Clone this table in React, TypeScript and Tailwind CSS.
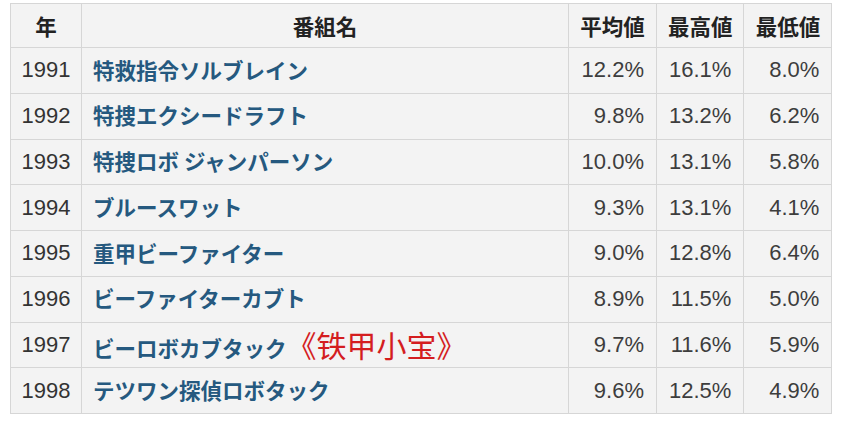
const rows = [
  { year: "1991", title: "特救指令ソルブレイン", avg: "12.2%", max: "16.1%", min: "8.0%" },
  { year: "1992", title: "特捜エクシードラフト", avg: "9.8%", max: "13.2%", min: "6.2%" },
  { year: "1993", title: "特捜ロボ ジャンパーソン", avg: "10.0%", max: "13.1%", min: "5.8%" },
  { year: "1994", title: "ブルースワット", avg: "9.3%", max: "13.1%", min: "4.1%" },
  { year: "1995", title: "重甲ビーファイター", avg: "9.0%", max: "12.8%", min: "6.4%" },
  { year: "1996", title: "ビーファイターカブト", avg: "8.9%", max: "11.5%", min: "5.0%" },
  { year: "1997", title: "ビーロボカブタック", note: "《铁甲小宝》", avg: "9.7%", max: "11.6%", min: "5.9%" },
  { year: "1998", title: "テツワン探偵ロボタック", avg: "9.6%", max: "12.5%", min: "4.9%" },
]

const jp = "font-['Noto_Sans_CJK_JP',sans-serif]"
const num = "font-['Liberation_Sans',Arial,sans-serif] text-[22px]"

export default function App() {
  return (
    <div className="w-[841px] h-[422px] bg-white pt-[3px] pl-[10px]">
      <table className="border-collapse bg-[#f3f3f3] text-[21.5px] leading-none">
        <thead>
          <tr className="h-[44px]">
            <th className={`w-[71px] border border-[#d6d6d6] font-semibold text-[#222] ${jp}`}>年</th>
            <th className={`w-[487px] border border-[#d6d6d6] font-semibold text-[#222] ${jp}`}>番組名</th>
            <th className={`w-[88px] border border-[#d6d6d6] font-semibold text-[#222] ${jp}`}>平均値</th>
            <th className={`w-[87px] border border-[#d6d6d6] font-semibold text-[#222] ${jp}`}>最高値</th>
            <th className={`w-[88px] border border-[#d6d6d6] font-semibold text-[#222] ${jp}`}>最低値</th>
          </tr>
        </thead>
        <tbody>
          {rows.map((r) => (
            <tr key={r.year} className="h-[45.75px]">
              <td className={`border border-[#d6d6d6] text-center text-[#333] ${num}`}>{r.year}</td>
              <td className={`border border-[#d6d6d6] pl-[11px] pr-3 pb-[2px] font-semibold text-[#25597f] ${jp}`}>
                {r.title}
                {r.note && (
                  <span className="text-[30px] font-normal text-[#d41d1f] font-['Noto_Sans_CJK_SC',sans-serif]">
                    {r.note}
                  </span>
                )}
              </td>
              <td className={`border border-[#d6d6d6] px-3 text-right text-[#3d3d3d] ${num}`}>{r.avg}</td>
              <td className={`border border-[#d6d6d6] px-3 text-right text-[#3d3d3d] ${num}`}>{r.max}</td>
              <td className={`border border-[#d6d6d6] px-3 text-right text-[#3d3d3d] ${num}`}>{r.min}</td>
            </tr>
          ))}
        </tbody>
      </table>
    </div>
  )
}
